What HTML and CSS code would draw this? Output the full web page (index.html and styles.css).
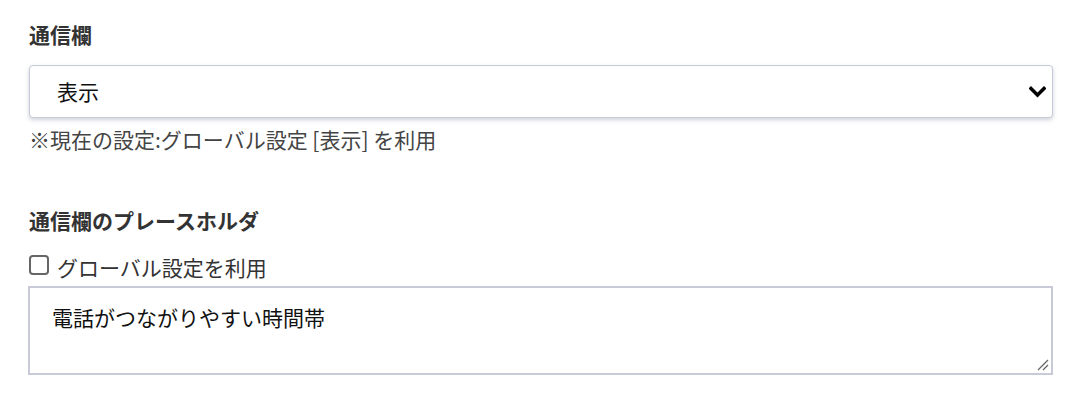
FILE: index.html
```html
<!DOCTYPE html>
<html lang="ja">
<head>
<meta charset="utf-8">
<title>通信欄設定</title>
<link rel="stylesheet" href="styles.css">
</head>
<body>
<div class="form">
  <section class="field">
    <h3 class="field-title">通信欄</h3>
    <div class="select-wrap">
      <div class="select">表示</div>
      <svg class="chevron" width="17" height="12" viewBox="0 0 17 12"><path d="M2 2.5 L8.5 9 L15 2.5" fill="none" stroke="#000" stroke-width="3.4" stroke-linecap="square"/></svg>
    </div>
    <p class="note">※現在の設定:グローバル設定 [表示] を利用</p>
  </section>
  <section class="field second">
    <h3 class="field-title">通信欄のプレースホルダ</h3>
    <label class="check"><span class="box"></span>グローバル設定を利用</label>
    <div class="textarea">電話がつながりやすい時間帯
      <svg class="grip" width="12" height="12" viewBox="0 0 12 12"><path d="M1 11 L11 1 M6 11 L11 6" stroke="#666" stroke-width="1.3"/></svg>
    </div>
  </section>
</div>
</body>
</html>
```
FILE: styles.css
```css
html, body {
  margin: 0;
  background: #fff;
}
body {
  font-family: "Noto Sans CJK JP", "Noto Sans", sans-serif;
  color: #222;
}
.form {
  padding: 19px 31px 0 29px;
}
.field-title {
  margin: 0;
  font-size: 21px;
  font-weight: 700;
  line-height: 30px;
  color: #333;
}
.select-wrap {
  position: relative;
  margin-top: 16px;
}
.select {
  height: 51px;
  border: 1px solid #c6c9d8;
  border-radius: 4px;
  box-shadow: 0 2px 4px rgba(120, 125, 150, 0.35);
  padding: 0 0 0 27px;
  font-size: 21px;
  line-height: 51px;
  color: #111;
  background: #fff;
}
.chevron {
  position: absolute;
  right: 7px;
  top: 21px;
}
.note {
  margin: 4px 0 0;
  font-size: 21px;
  line-height: 34px;
  color: #444;
}
.second {
  margin-top: 49px;
}
.check {
  display: flex;
  align-items: center;
  gap: 8px;
  margin-top: 17px;
  font-size: 21px;
  line-height: 30px;
  color: #333;
}
.box {
  width: 16px;
  height: 16px;
  border: 2px solid #666;
  border-radius: 4px;
  box-sizing: content-box;
  margin-top: -4px;
}
.textarea {
  position: relative;
  margin-top: 4px;
  margin-left: -1px;
  height: 89px;
  border: 2px solid #c8cad8;
  padding: 13px 22px;
  box-sizing: border-box;
  font-size: 21px;
  line-height: 32px;
  color: #111;
}
.grip {
  position: absolute;
  right: 2px;
  bottom: 2px;
}
```
